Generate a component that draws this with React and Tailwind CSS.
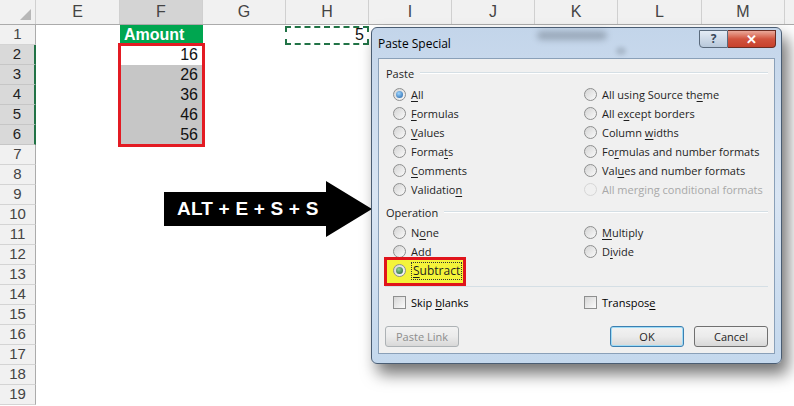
import React from "react";

const cols = [
  { l: "E", w: 84 },
  { l: "F", w: 83 },
  { l: "G", w: 83 },
  { l: "H", w: 83 },
  { l: "I", w: 83 },
  { l: "J", w: 83 },
  { l: "K", w: 83 },
  { l: "L", w: 84 },
  { l: "M", w: 83 },
];

const rows = Array.from({ length: 19 }, (_, i) => i + 1);
const amounts = { 2: "16", 3: "26", 4: "36", 5: "46", 6: "56" };

function Label({ t, u }) {
  if (u === undefined || u < 0) return <span>{t}</span>;
  return (
    <span>
      {t.slice(0, u)}
      <span className="underline underline-offset-2">{t[u]}</span>
      {t.slice(u + 1)}
    </span>
  );
}

function Radio({ checked, disabled, green }) {
  return (
    <span
      className={
        "w-[13px] h-[13px] rounded-full border flex items-center justify-center shrink-0 " +
        (disabled
          ? "border-[#d6d6d6] bg-[#f0f0f0]"
          : "border-[#8e8f8f] bg-linear-to-br from-[#d4d4d4] to-[#fafafa]")
      }
    >
      {checked && (
        <span
          className={
            "w-[7px] h-[7px] rounded-full " +
            (green
              ? "bg-[radial-gradient(circle_at_40%_35%,#8fd39a,#1f5c2c)]"
              : "bg-[radial-gradient(circle_at_40%_35%,#9fd6ff,#1d5fa6)]")
          }
        />
      )}
    </span>
  );
}

function Check() {
  return (
    <span className="w-[13px] h-[13px] border border-[#8e8f8f] bg-linear-to-br from-[#d6d6d6] to-[#fbfbfb] shrink-0" />
  );
}

function Opt({ t, u, checked, disabled }) {
  return (
    <div className="h-[19px] flex items-center gap-[5px]">
      <Radio checked={checked} disabled={disabled} />
      <span className={disabled ? "text-[#a8a8a8]" : "text-[#1e1e1e]"}>
        <Label t={t} u={disabled ? -1 : u} />
      </span>
    </div>
  );
}

function GroupHead({ t }) {
  return (
    <div className="h-[18px] flex items-center gap-[6px] pl-[7px] pr-[6px]">
      <span className="text-[#1e1e1e]">{t}</span>
      <span className="flex-1 border-t border-[#d5dfe5] border-b-white border-b" />
    </div>
  );
}

function Button({ children, variant }) {
  const v =
    variant === "disabled"
      ? "border-[#adb2b5] text-[#8d8d8d]"
      : variant === "default"
      ? "border-[#3c7fb1] text-[#1e1e1e] shadow-[inset_0_0_0_1px_#9fdcf6]"
      : "border-[#707070] text-[#1e1e1e]";
  return (
    <div
      className={
        "h-[21px] rounded-[3px] border flex items-center justify-center bg-linear-to-b from-[#f2f2f2] via-[#ebebeb] to-[#d8d8d8] " +
        v
      }
    >
      {children}
    </div>
  );
}

function Dialog() {
  return (
    <div className="absolute left-[371px] top-[27px] w-[411px] h-[337px] rounded-[6px] border border-[#4a5d73] bg-linear-to-b from-[#c3d5ea] via-[#d9e5f3] to-[#c4d8ed] shadow-[6px_10px_16px_rgba(0,0,0,0.55)] font-['Open_Sans',sans-serif] text-[11px] leading-none">
      <div className="absolute left-[165px] top-[3px] w-[70px] h-[9px] rounded-full bg-[#5b6672] opacity-40 blur-[3px]" />
      <div className="absolute left-[244px] top-[19px] w-[10px] h-[8px] rounded-full bg-[#6a7784] opacity-30 blur-[2px]" />
      <div className="h-[30px] flex items-start justify-between pl-[6px] pr-[5px]">
        <span className="mt-[10px] text-[12px] text-black">Paste Special</span>
        <div className="flex mt-[2px]">
          <div className="w-[29px] h-[18px] rounded-bl-[4px] border border-[#5a6a7c] bg-linear-to-b from-[#e4ecf5] to-[#b8c8da] flex items-center justify-center text-[#39485a] font-bold text-[12px]">
            ?
          </div>
          <div className="w-[48px] h-[18px] rounded-br-[4px] border border-l-0 border-[#6b2c22] bg-linear-to-b from-[#e9a89a] via-[#d1533e] to-[#c7412c] flex items-center justify-center text-white font-bold text-[13px]">
            ✕
          </div>
        </div>
      </div>
      <div className="mx-[6px] h-[296px] border border-[#8aa0b8] bg-[#f0f0f0] pt-[5px]">
        <GroupHead t="Paste" />
        <div className="mt-[3px] ml-[14px] grid grid-cols-[191px_1fr]">
          <Opt t="All" u={0} checked />
          <Opt t="All using Source theme" u={19} />
          <Opt t="Formulas" u={0} />
          <Opt t="All except borders" u={5} />
          <Opt t="Values" u={0} />
          <Opt t="Column widths" u={7} />
          <Opt t="Formats" u={5} />
          <Opt t="Formulas and number formats" u={2} />
          <Opt t="Comments" u={0} />
          <Opt t="Values and number formats" u={3} />
          <Opt t="Validation" u={9} />
          <Opt t="All merging conditional formats" disabled />
        </div>
        <div className="mt-[4px]">
          <GroupHead t="Operation" />
        </div>
        <div className="mt-[2px] ml-[14px] grid grid-cols-[191px_1fr]">
          <Opt t="None" u={1} />
          <Opt t="Multiply" u={0} />
          <Opt t="Add" u={1} />
          <Opt t="Divide" u={1} />
          <div className="relative h-[19px] flex items-center gap-[5px]">
            <div className="absolute left-[-9px] top-[-4px] w-[82px] h-[29px] border-[3px] border-[#e0141b] bg-[#f4f43a]" />
            <span className="relative">
              <Radio checked green />
            </span>
            <span className="relative text-[#1e1e1e] text-[12px] border border-dotted border-[#333] px-[1px] py-[2px]">
              <Label t="Subtract" u={0} />
            </span>
          </div>
          <div />
        </div>
        <div className="mt-[6px] mx-[6px] border-t border-[#d5dfe5]" />
        <div className="mt-[6px] ml-[14px] grid grid-cols-[191px_1fr]">
          <div className="h-[19px] flex items-center gap-[5px]">
            <Check />
            <Label t="Skip blanks" u={5} />
          </div>
          <div className="h-[19px] flex items-center gap-[5px]">
            <Check />
            <Label t="Transpose" u={8} />
          </div>
        </div>
        <div className="mt-[14px] px-[6px] flex">
          <div className="w-[74px]">
            <Button variant="disabled">Paste Link</Button>
          </div>
          <div className="flex-1" />
          <div className="w-[74px]">
            <Button variant="default">OK</Button>
          </div>
          <div className="w-[74px] ml-[10px]">
            <Button>Cancel</Button>
          </div>
        </div>
      </div>
    </div>
  );
}

function Arrow() {
  return (
    <div className="absolute left-[164px] top-[181px] w-[209px] h-[57px]">
      <svg width="209" height="57" viewBox="0 0 209 57" className="absolute inset-0">
        <polygon points="0,11 162,11 162,0 208,28 162,56 162,45 0,45" fill="#000" />
      </svg>
      <div className="absolute left-[13px] top-[11px] h-[34px] flex items-center text-white font-bold text-[19px] tracking-[0.2px] font-['Liberation_Sans',Arial,sans-serif]">
        ALT + E + S + S
      </div>
    </div>
  );
}

export default function App() {
  return (
    <div className="relative w-[794px] h-[406px] overflow-hidden bg-white font-['Liberation_Sans',Arial,sans-serif] text-[16px]">
      {/* column header row */}
      <div className="flex h-[25px] bg-[#f1f1f1] border-b border-[#ababab]">
        <div className="w-[36px] relative border-r border-[#d0d0d0]">
          <svg width="12" height="12" className="absolute right-[3px] bottom-[3px]">
            <polygon points="11,0 11,11 0,11" fill="#b7b7b7" />
          </svg>
        </div>
        {cols.map((c) => (
          <div
            key={c.l}
            style={{ width: c.w }}
            className={
              "flex items-center justify-center border-r border-[#d0d0d0] text-[#444] " +
              (c.l === "F" ? "bg-[#d4d4d4] text-[#222]" : "")
            }
          >
            {c.l}
          </div>
        ))}
        <div className="flex-1" />
      </div>
      {rows.map((r) => {
        const sel = r >= 2 && r <= 6;
        return (
          <div key={r} className="flex h-[20px]">
            <div
              className={
                "w-[36px] flex items-center justify-center border-b text-[15px] " +
                (sel
                  ? "bg-[#d9d9d9] border-[#c6c6c6] border-r-2 border-r-[#217346] text-[#222]"
                  : "bg-[#f1f1f1] border-[#d4d4d4] border-r border-r-[#ababab] text-[#444]")
              }
            >
              {r}
            </div>
            {cols.map((c) => {
              let cls = "";
              let content = null;
              if (c.l === "F" && r === 1) {
                cls = "bg-[#00a650] text-white font-bold justify-start pl-[4px]";
                content = "Amount";
              } else if (c.l === "F" && sel) {
                cls = (r === 2 ? "bg-white" : "bg-[#c6c6c6]") + " justify-end pr-[5px] text-[#111]";
                content = amounts[r];
              } else if (c.l === "H" && r === 1) {
                cls = "justify-end pr-[5px] text-[#111]";
                content = "5";
              }
              return (
                <div key={c.l} style={{ width: c.w }} className={"flex items-center " + cls}>
                  {content}
                </div>
              );
            })}
          </div>
        );
      })}
      {/* copied cell marquee */}
      <div className="absolute left-[285px] top-[26px] w-[84px] h-[19px] border-2 border-dashed border-[#217346]" />
      {/* annotation box around amounts */}
      <div className="absolute left-[118px] top-[43px] w-[87px] h-[104px] border-[3px] border-[#e31b23]" />
      <Arrow />
      <Dialog />
    </div>
  );
}
